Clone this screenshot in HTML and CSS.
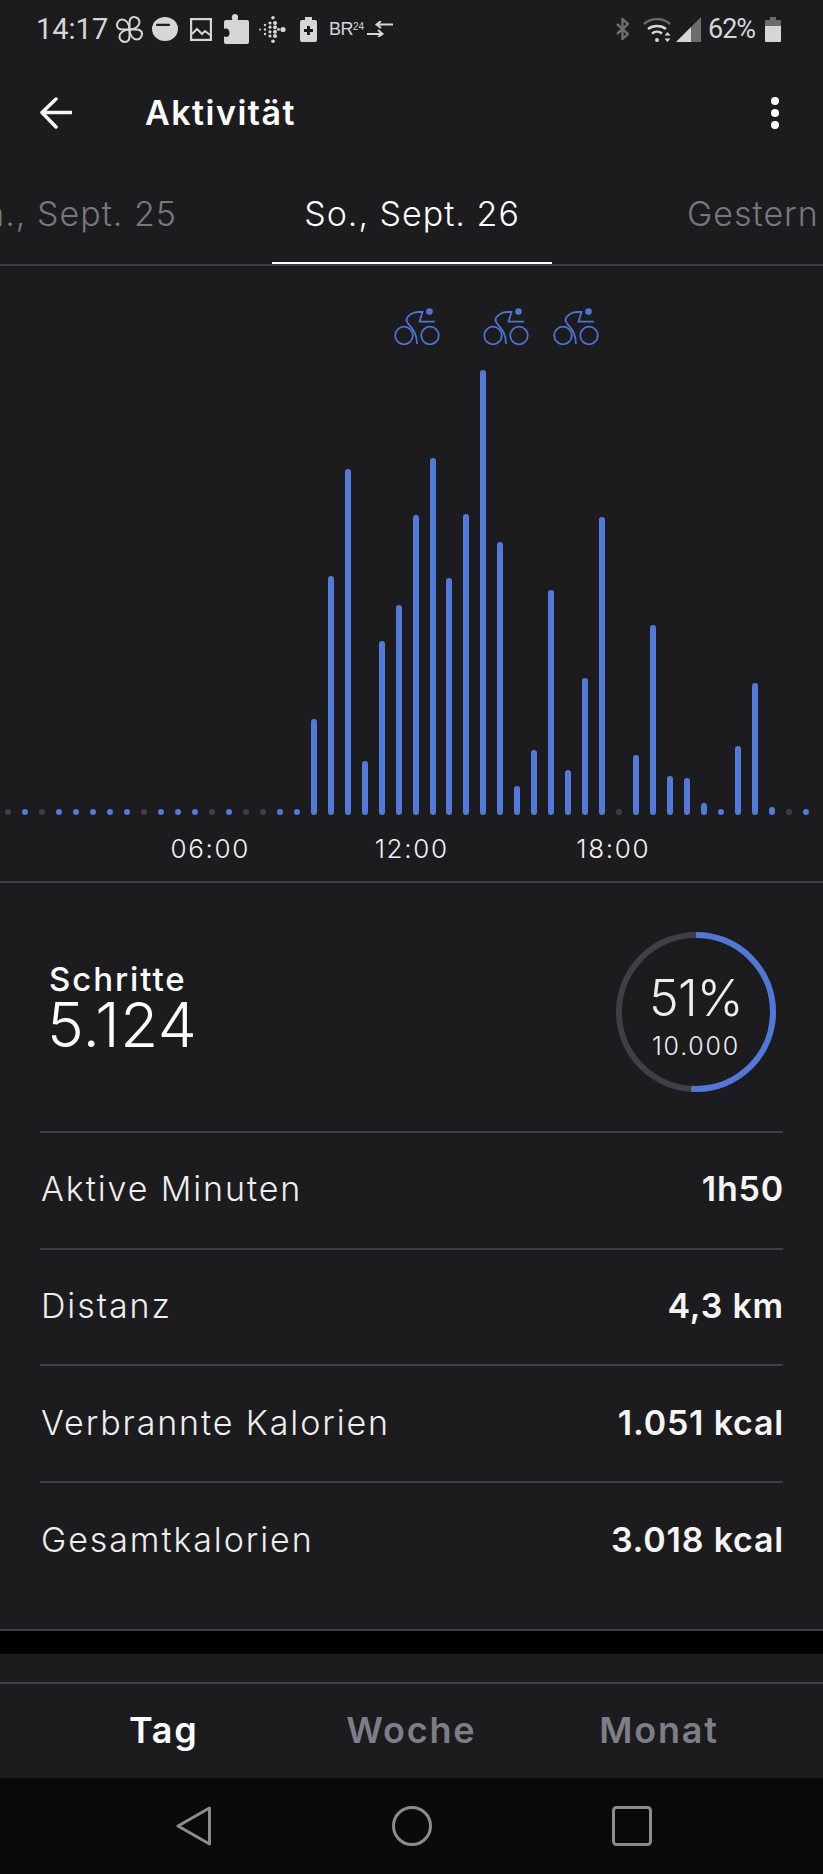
FILE: index.html
```html
<!DOCTYPE html>
<html lang="de">
<head>
<meta charset="utf-8">
<title>Aktivität</title>
<link rel="stylesheet" href="styles.css">
</head>
<body>
<div class="screen">
  <div class="status">
    <div class="status-group">
      <span class="time">14:17</span>
      <svg class="si fan" viewBox="0 0 27 27"><g class="line thin"><path d="M13.500 13.500V7C13.500 3 15.500 1 18 1S23.500 3 23.500 6c0 4-4 7.500-10 7.500z"/><path d="M13.500 13.500H20C24 13.500 26 15.500 26 18S24 23.500 21 23.500c-4 0-7.500-4-7.500-10z"/><path d="M13.500 13.500V20C13.500 24 11.500 26 9 26S3.500 24 3.500 21c0-4 4-7.500 10-7.500z"/><path d="M13.500 13.500H7C3 13.500 1 11.500 1 9S3 3.500 6 3.500c4 0 7.500 4 7.500 10z"/></g></svg>
      <svg class="si disc" viewBox="0 0 26 24"><ellipse class="solid" cx="13" cy="12" rx="13" ry="12"/><rect class="cut" x="4" y="6.800" width="14" height="2.200" rx="1.100"/></svg>
      <svg class="si pic" viewBox="0 0 22 23"><rect class="line" x="1" y="1" width="20" height="21"/><path class="line thin" d="M2 16l5-5 5 5 3-3 5 4"/></svg>
      <svg class="si puzzle" viewBox="0 0 25 30"><path class="solid" d="M2 6h6.500C7 3 8 0 11 0s4 3 2.500 6H23a2 2 0 0 1 2 2v20a2 2 0 0 1-2 2H2a2 2 0 0 1-2-2v-5.500c3 1.200 5.500 0 5.500-3.500S3 13.800 0 15V8a2 2 0 0 1 2-2z"/></svg>
      <svg class="si fit" viewBox="0 0 27 27"><g class="solid"><circle cx="1" cy="13.500" r="1"/><circle cx="6" cy="9" r="1.200"/><circle cx="6" cy="13.500" r="1.200"/><circle cx="6" cy="18" r="1.200"/><circle cx="11" cy="7" r="1.600"/><circle cx="11" cy="11.200" r="1.600"/><circle cx="11" cy="15.800" r="1.600"/><circle cx="11" cy="20" r="1.600"/><circle cx="14" cy="1.800" r="1.800"/><circle cx="14" cy="25.200" r="1.800"/><circle cx="16" cy="7" r="2"/><circle cx="16" cy="11.200" r="2"/><circle cx="16" cy="15.800" r="2"/><circle cx="16" cy="20" r="2"/><circle cx="24" cy="13.500" r="2.600"/><circle cx="19.500" cy="13.500" r="1.400"/></g></svg>
      <svg class="si batplus" viewBox="0 0 17 25"><path class="solid" d="M5 0h7v3h3a2 2 0 0 1 2 2v18a2 2 0 0 1-2 2H2a2 2 0 0 1-2-2V5a2 2 0 0 1 2-2h3z"/><path class="cut" d="M7 9h3v3h3v3h-3v3H7v-3H4v-3h3z"/></svg>
      <span class="br">BR<sup class="br-sup">24</sup></span>
      <svg class="si swap" viewBox="0 0 26 16"><path class="line thin" d="M0 13h15M11 9l4.500 4-4.500 3M26 3.500H10M14 0l-4.500 3.500 4.500 3.500"/></svg>
    </div>
    <div class="status-group">
      <svg class="si bt" viewBox="0 0 13 22"><path class="dim" d="M1 6l11 10-5.500 5V1L12 6 1 16"/></svg>
      <svg class="si wifi" viewBox="0 0 28 25"><path class="dim" d="M1 7C8 .5 20 .5 27 7"/><path class="line" d="M5 12c5-4 13-4 18 0M9 16.500c3-2.500 7-2.500 10 0"/><circle class="solid" cx="14" cy="23" r="2"/><path class="solid" d="M24.500 15l3 3.500h-6zM24.500 25l-3-3.500h6z"/></svg>
      <svg class="si signal" viewBox="0 0 25 25"><path class="dimfill" d="M15 10L25 0v25H15z"/><path class="solid" d="M0 25L15 10v15z"/></svg>
      <span class="pct">62%</span>
      <svg class="si batt" viewBox="0 0 16 25"><path class="dimfill" d="M5 0h6v3h4a1 1 0 0 1 1 1v5H0V4a1 1 0 0 1 1-1h4z"/><path class="solid" d="M0 9h16v15a1 1 0 0 1-1 1H1a1 1 0 0 1-1-1z"/></svg>
    </div>
  </div>

  <header class="toolbar">
    <svg class="back" viewBox="0 0 32 32"><path d="M31 15.500H3M16 2L2 15.500 16 30"/></svg>
    <h1 class="title">Aktivität</h1>
    <div class="menu"><i></i><i></i><i></i></div>
  </header>

  <nav class="tabs">
    <div class="tab side left-tab"><span>Sa., Sept. 25</span></div>
    <div class="tab active"><span>So., Sept. 26</span></div>
    <div class="tab side right-tab"><span>Gestern</span></div>
  </nav>

  <section class="chart">
    <svg class="defs" width="0" height="0"><defs><g id="bike-shape"><circle class="bike-dot" cx="35.500" cy="3.600" r="3.300"/><circle class="bike-line" cx="10" cy="27.500" r="8.800"/><circle class="bike-line" cx="36" cy="27.500" r="8.800"/><path class="bike-line" d="M41 13.700H25.500L28.500 4H24C18 4 13 8 12.500 12C12.500 17 23 20 23 36"/></g></defs></svg>
    <div class="bikes">
      <svg class="bike" viewBox="0 0 46 37"><use href="#bike-shape"/></svg>
      <svg class="bike second" viewBox="0 0 46 37"><use href="#bike-shape"/></svg>
      <svg class="bike third" viewBox="0 0 46 37"><use href="#bike-shape"/></svg>
    </div>
    <div class="bars">
      <i class="b off"></i><i class="b"></i><i class="b off"></i><i class="b"></i><i class="b"></i><i class="b"></i><i class="b"></i><i class="b"></i><i class="b off"></i><i class="b"></i><i class="b"></i><i class="b"></i><i class="b off"></i><i class="b"></i><i class="b off"></i><i class="b off"></i><i class="b"></i><i class="b"></i>
      <i class="b" style="height:96px"></i><i class="b" style="height:239px"></i><i class="b" style="height:346px"></i><i class="b" style="height:54px"></i><i class="b" style="height:174px"></i><i class="b" style="height:210px"></i>
      <i class="b" style="height:300px"></i><i class="b" style="height:357px"></i><i class="b" style="height:237px"></i><i class="b" style="height:301px"></i><i class="b" style="height:445px"></i><i class="b" style="height:273px"></i>
      <i class="b" style="height:29px"></i><i class="b" style="height:65px"></i><i class="b" style="height:225px"></i><i class="b" style="height:45px"></i><i class="b" style="height:137px"></i><i class="b" style="height:298px"></i>
      <i class="b off"></i><i class="b" style="height:60px"></i><i class="b" style="height:190px"></i><i class="b" style="height:39px"></i><i class="b" style="height:37px"></i><i class="b" style="height:12px"></i>
      <i class="b"></i><i class="b" style="height:69px"></i><i class="b" style="height:132px"></i><i class="b" style="height:8px"></i><i class="b off"></i><i class="b"></i>
    </div>
    <div class="axis"><span>06:00</span><span>12:00</span><span>18:00</span></div>
  </section>

  <section class="stats">
    <div class="steps">
      <div class="steps-text">
        <div class="steps-label">Schritte</div>
        <div class="steps-value">5.124</div>
      </div>
      <div class="ring">
        <svg class="ring-svg" viewBox="0 0 160 160"><circle class="ring-bg" cx="80" cy="80" r="77"/><circle class="ring-fg" cx="80" cy="80" r="77" pathLength="100" stroke-dasharray="51 100" transform="rotate(-90 80 80)"/></svg>
        <div class="ring-text"><div class="ring-pct">51%</div><div class="ring-goal">10.000</div></div>
      </div>
    </div>
    <div class="row"><span class="row-label">Aktive Minuten</span><span class="row-value">1h50</span></div>
    <div class="row"><span class="row-label">Distanz</span><span class="row-value">4,3 km</span></div>
    <div class="row"><span class="row-label">Verbrannte Kalorien</span><span class="row-value">1.051 kcal</span></div>
    <div class="row"><span class="row-label">Gesamtkalorien</span><span class="row-value">3.018 kcal</span></div>
  </section>

  <div class="gap"></div>

  <div class="bottom">
    <div class="range">
      <span class="range-item on">Tag</span><span class="range-item">Woche</span><span class="range-item">Monat</span>
    </div>
  </div>

  <div class="navbar">
    <svg class="nav-icon tri" viewBox="0 0 36 40"><path d="M33.500 2L2 20l31.500 18z"/></svg>
    <svg class="nav-icon home" viewBox="0 0 40 40"><circle cx="20" cy="20" r="18.500"/></svg>
    <svg class="nav-icon recent" viewBox="0 0 40 40"><rect x="1.500" y="1.500" width="37" height="37" rx="3"/></svg>
  </div>
</div>
</body>
</html>
```
FILE: styles.css
```css
* { box-sizing: border-box; }
html, body { margin: 0; padding: 0; background: #1c1c1f; }
body { font-family: Inter, "Open Sans", sans-serif; color: #fff; }
.screen { width: 823px; height: 1874px; overflow: hidden; background: #1c1c1f; display: flex; flex-direction: column; }

/* status bar */
.status { height: 60px; flex: none; padding: 14px 42px 0 36px; display: flex; justify-content: space-between; align-items: flex-start; color: #d6d6d6; }
.status-group { display: flex; align-items: center; height: 30px; }
.time { font: 400 29px/30px Roboto, sans-serif; width: 80px; flex: none; }
.si { display: block; flex: none; height: auto; }
.fan { width: 27px; }
.disc { width: 26px; margin-left: 9px; }
.pic { width: 22px; margin-left: 12px; }
.puzzle { width: 25px; margin-left: 12px; }
.fit { width: 27px; margin-left: 10px; }
.batplus { width: 17px; margin-left: 14px; }
.br { font: 400 18px/20px "Liberation Sans", sans-serif; width: 30px; margin-left: 12px; letter-spacing: -.5px; white-space: nowrap; flex: none; }
.br-sup { font-size: 10px; vertical-align: 5px; line-height: 0; letter-spacing: 0; }
.swap { width: 26px; margin-left: 8px; }
.bt { width: 13px; }
.wifi { width: 28px; margin-left: 14px; }
.signal { width: 25px; margin-left: 5px; }
.pct { font: 400 27px/30px Roboto, sans-serif; margin-left: 7px; width: 47px; letter-spacing: -1px; white-space: nowrap; flex: none; }
.batt { width: 16px; margin-left: 10px; }
.line { fill: none; stroke: #d6d6d6; stroke-width: 2.400; }
.line.thin { stroke-width: 2; }
.solid { fill: #d6d6d6; stroke: none; }
.cut { fill: #1c1c1f; }
.dim { fill: none; stroke: #6c6c6c; stroke-width: 2.400; }
.dimfill { fill: #6c6c6c; }

/* toolbar */
.toolbar { height: 106px; flex: none; display: flex; align-items: center; padding: 0 40px; }
.back { width: 32px; height: 32px; fill: none; stroke: #f5f5f5; stroke-width: 3.500; stroke-linecap: round; stroke-linejoin: round; flex: none; }
.title { flex: 1; margin: 0 0 0 73px; font-size: 34px; line-height: 40px; font-weight: 600; letter-spacing: 1.500px; }
.menu { display: flex; flex-direction: column; gap: 4px; margin-right: 4px; }
.menu i { display: block; width: 8px; height: 8px; border-radius: 50%; background: #fff; }

/* date tabs */
.tabs { height: 100px; flex: none; display: grid; grid-template-columns: 272px 280px 271px; border-bottom: 2px solid #3f4045; white-space: nowrap; overflow: hidden; font-size: 34px; font-weight: 300; letter-spacing: 1px; }
.tab { display: flex; align-items: center; justify-content: center; padding-bottom: 4px; overflow: hidden; }
.tab.side { color: #77787e; }
.left-tab { justify-content: flex-end; padding-right: 95px; }
.right-tab { justify-content: flex-start; padding-left: 135px; }
.tab.active { box-shadow: inset 0 -3px 0 #fff; height: 99px; }

/* chart */
.chart { height: 617px; flex: none; border-bottom: 2px solid #3f4045; display: flex; flex-direction: column; }
.defs { position: absolute; }
.bikes { height: 104px; padding: 42px 0 0 394px; display: flex; flex: none; }
.bike { width: 46px; height: 37px; flex: none; }
.bike.second { margin-left: 43px; }
.bike.third { margin-left: 24px; }
.bike-line { fill: none; stroke: #4c74d2; stroke-width: 1.800; }
.bike-dot { fill: #4c74d2; }
.bars { height: 445px; flex: none; display: flex; align-items: flex-end; gap: 10.970px; padding-left: 5.300px; }
.b { display: block; width: 6px; height: 6px; border-radius: 3px; background: #527adb; flex: none; }
.b.off { background: #3e3f45; }
.axis { display: grid; grid-template-columns: repeat(3, 201.500px); padding: 21px 0 0 109.500px; font-size: 26px; line-height: 26px; letter-spacing: 1.700px; color: #f2f2f2; text-align: center; font-weight: 300; }

/* stats */
.stats { height: 748px; flex: none; padding: 0 40px; border-bottom: 2px solid #3f4045; }
.steps { height: 250px; display: flex; justify-content: space-between; align-items: center; padding: 0 7px 0 9px; border-bottom: 2px solid #3f4045; }
.steps-label { font-size: 33px; line-height: 36px; font-weight: 500; letter-spacing: 1.900px; }
.steps-value { font-size: 62px; line-height: 56px; font-weight: 300; letter-spacing: .5px; margin-left: -2px; }
.ring { position: relative; width: 160px; height: 160px; flex: none; margin-top: 9px; }
.ring-svg { display: block; width: 160px; height: 160px; }
.ring-bg { fill: none; stroke: #3e3f47; stroke-width: 6; }
.ring-fg { fill: none; stroke: #4f78d8; stroke-width: 6; }
.ring-text { position: absolute; inset: 0; display: flex; flex-direction: column; align-items: center; justify-content: center; padding-top: 9px; gap: 2.400px; }
.ring-pct { font-size: 50px; line-height: 58px; font-weight: 300; color: #eee; letter-spacing: -.8px; }
.ring-goal { font-size: 25px; line-height: 34px; font-weight: 300; color: #eee; letter-spacing: 1.800px; }
.row { height: 116.700px; display: flex; align-items: center; justify-content: space-between; padding-bottom: 3px; border-bottom: 2px solid #3f4045; }
.row:last-child { border-bottom: 0; }
.row-label { font-size: 34px; font-weight: 300; color: #eee; letter-spacing: 1.900px; margin-left: 1px; }
.row-value { font-size: 34px; font-weight: 600; color: #f5f5f5; letter-spacing: .8px; margin-right: -1px; }

/* filler + bottom */
.gap { height: 23px; background: #000; flex: none; }
.bottom { flex: none; height: 124px; padding-top: 28px; }
.range { height: 96px; border-top: 2px solid #3f4045; display: grid; grid-template-columns: repeat(3, 247.600px); padding: 0 40px 2px; align-items: center; }
.range-item { text-align: center; font-size: 36px; font-weight: 600; color: #7d7e86; letter-spacing: 1.800px; }
.range-item.on { color: #fff; }
.navbar { flex: 1; background: #0a0a0a; display: flex; align-items: center; padding: 0 0 0 176px; }
.nav-icon { width: 40px; height: 40px; fill: none; stroke: #8c8c8c; stroke-width: 3; stroke-linejoin: round; flex: none; }
.tri { width: 36px; }
.home { margin-left: 180px; }
.recent { margin-left: 180px; }
```
